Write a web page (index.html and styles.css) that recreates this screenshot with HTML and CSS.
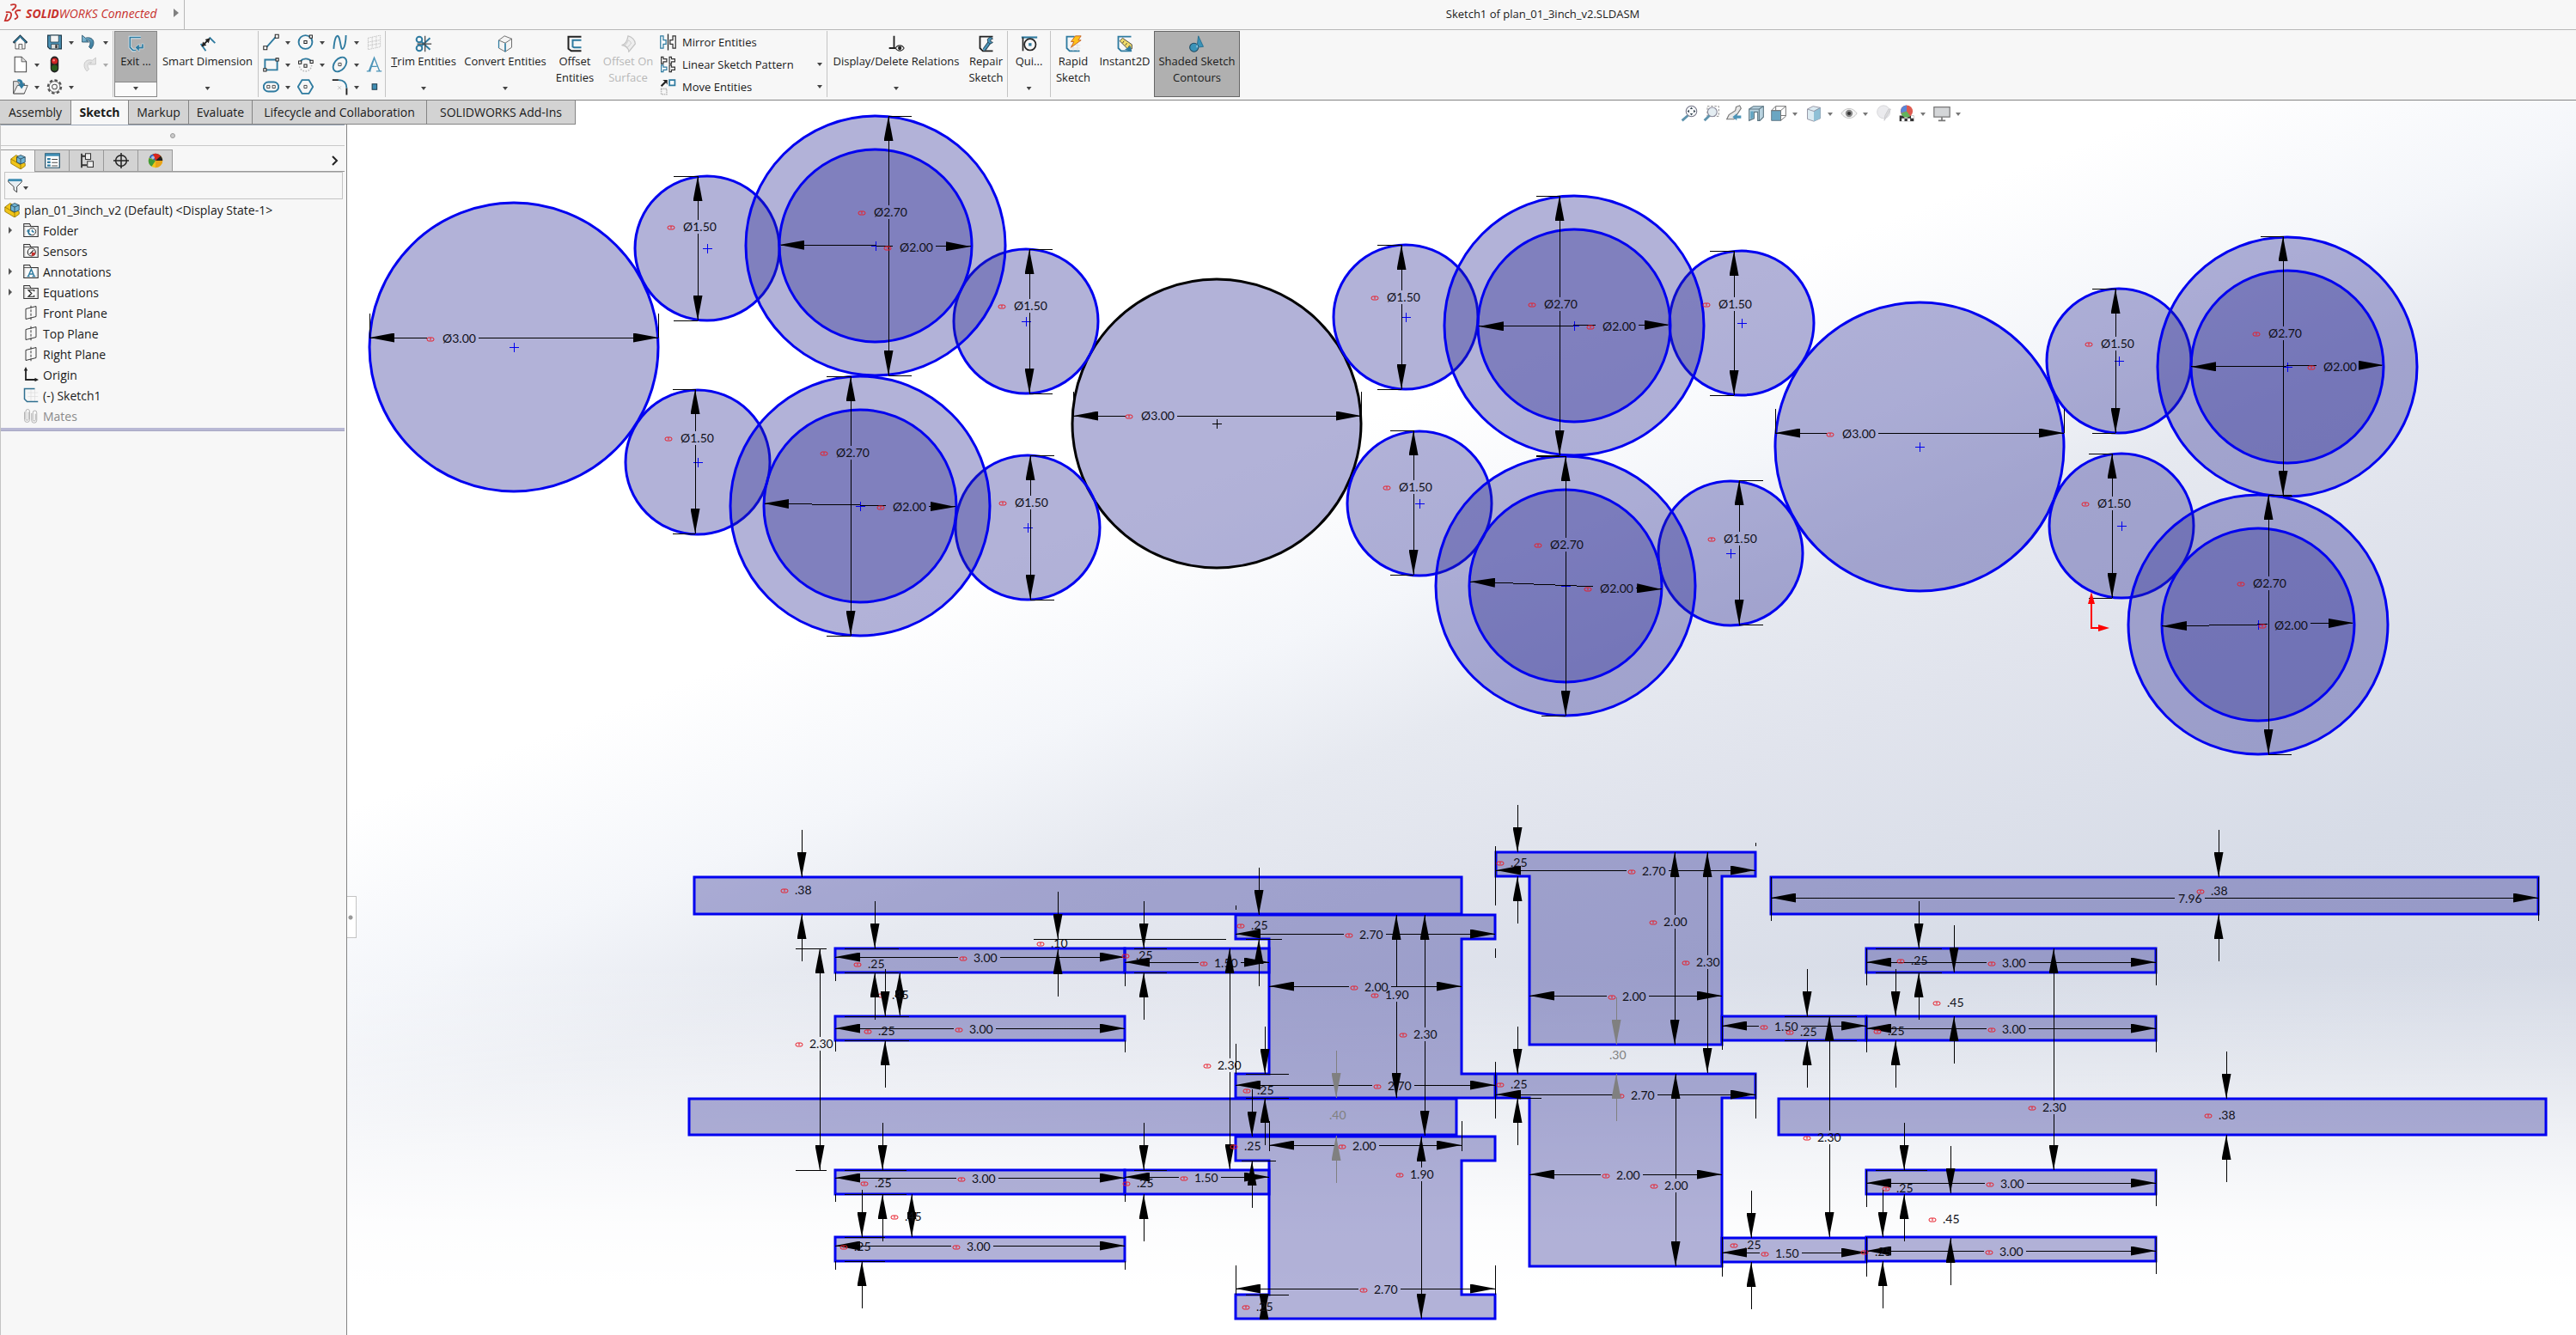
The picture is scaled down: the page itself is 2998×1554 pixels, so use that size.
FILE: index.html
```html
<!DOCTYPE html>
<html lang="en">
<head>
<meta charset="utf-8">
<title>Sketch1 of plan_01_3inch_v2.SLDASM</title>
<link rel="stylesheet" href="styles.css">
</head>
<body>
<svg class="defs" aria-hidden="true">
  <defs>
    <linearGradient id="gb" x1="0" y1="0" x2="1" y2="1"><stop offset="0" stop-color="#8cc4de"/><stop offset="1" stop-color="#2c6f92"/></linearGradient>
    <symbol id="i-home" viewBox="0 0 24 24"><path d="M5 12v10h14V12L12 5z" fill="#fff" stroke="#333"/><path d="M2 13L12 3l10 10" fill="none" stroke="#1f3a4a" stroke-width="3"/><path d="M4 12l8-8 8 8" fill="none" stroke="#3f8db3" stroke-width="1.5"/><path d="M10 22v-7h5v7" fill="#eee" stroke="#333"/></symbol>
    <symbol id="i-save" viewBox="0 0 24 24"><path d="M2 2h20v20H5l-3-3z" fill="#4c94b8" stroke="#1f3a4a" stroke-width="1.5"/><path d="M6 2h12v10H6z" fill="#f4f4f4" stroke="#1f3a4a"/><path d="M7 15h11v7H7z" fill="#ddd" stroke="#1f3a4a"/><path d="M13 16h3v5h-3z" fill="#333"/></symbol>
    <symbol id="i-undo" viewBox="0 0 24 24"><path d="M2 2v10h10L8 9c5-1 8 4 4 10l3 3c8-9 3-19-8-16z" fill="url(#gb)" stroke="#1f4a62"/></symbol>
    <symbol id="i-redo" viewBox="0 0 24 24"><path d="M22 2v10H12l4-3c-5-1-8 4-4 10l-3 3C1 13 6 3 17 6z" fill="#e4e4e4" stroke="#c0c0c0"/></symbol>
    <symbol id="i-new" viewBox="0 0 24 24"><path d="M4 1h10l7 7v15H4z" fill="#fff" stroke="#444" stroke-width="1.3"/><path d="M14 1v7h7" fill="#ddd" stroke="#444"/></symbol>
    <symbol id="i-light" viewBox="0 0 24 24"><rect x="6" y="0" width="12" height="24" rx="6" fill="#222"/><circle cx="12" cy="7" r="4.500" fill="#c22"/><circle cx="12" cy="17" r="4.500" fill="#285a1c"/><circle cx="11" cy="6" r="1.500" fill="#f88"/></symbol>
    <symbol id="i-open" viewBox="0 0 24 24"><path d="M2 4h6l2 3h8v15H2z" fill="#ddd" stroke="#333"/><path d="M2 22L8 10h15l-5 12z" fill="#f4f4f4" stroke="#333"/><path d="M8 1c6-1 8 2 8 7h3l-5 7-5-7h3c0-3-1-4-4-4z" fill="#2f7ba0"/></symbol>
    <symbol id="i-gear" viewBox="0 0 24 24"><circle cx="12" cy="12" r="9.500" fill="none" stroke="#555" stroke-width="3" stroke-dasharray="4.400 3"/><circle cx="12" cy="12" r="8" fill="#f7f7f7" stroke="#555"/><circle cx="12" cy="12" r="3.600" fill="#fff" stroke="#555" stroke-width="1.3"/></symbol>
    <symbol id="i-exit" viewBox="0 0 24 24"><path d="M19 3H4v14l4 4h4" fill="none" stroke="#d9e8f0" stroke-width="4"/><path d="M19 3H4v14l4 4h4" fill="none" stroke="#2f7ba0" stroke-width="2"/><path d="M23 12v7h-6v4l-6-6 6-5v4h3v-4z" fill="#2f7ba0" stroke="#e4eef3" stroke-width=".7"/></symbol>
    <symbol id="i-smart" viewBox="0 0 24 24"><path d="M14 3l8 8M2 12l7 10" stroke="#2f7ba0" stroke-width="2.2"/><path d="M4 15L14 5" stroke="#222" stroke-width="2.2"/><path d="M3 16l2-7 5 5zM15 4l-2 7-5-5z" fill="#222"/></symbol>
    <symbol id="i-line" viewBox="0 0 24 24"><path d="M4 21L20 3" stroke="#2f7ba0" stroke-width="2.4"/><path d="M1 18h5v5H1zM18 1h5v5h-5z" fill="#fff" stroke="#222" stroke-width="1.3"/></symbol>
    <symbol id="i-circle" viewBox="0 0 24 24"><circle cx="12" cy="12" r="10" fill="none" stroke="#2f7ba0" stroke-width="2.4"/><path d="M10 10h4v4h-4zM18 2h4v4h-4z" fill="#fff" stroke="#222" stroke-width="1.3"/></symbol>
    <symbol id="i-spline" viewBox="0 0 24 24"><path d="M3 22C4 8 7 0 10 4s3 19 6 18 5-11 5-20" fill="none" stroke="#2f7ba0" stroke-width="2.4"/></symbol>
    <symbol id="i-plane" viewBox="0 0 24 24"><path d="M3 6l18-4v17L3 23zM9 5v16M15 4v16M3 12l18-3M3 17l18-3" fill="none" stroke="#bbb" stroke-dasharray="2 1"/></symbol>
    <symbol id="i-rect" viewBox="0 0 24 24"><path d="M3 5h18v15H3z" fill="none" stroke="#2f7ba0" stroke-width="2.4"/><path d="M1 18h4v4H1zM19 3h4v4h-4z" fill="#fff" stroke="#222" stroke-width="1.3"/></symbol>
    <symbol id="i-arc" viewBox="0 0 24 24"><circle cx="12" cy="13" r="9" fill="none" stroke="#bbb" stroke-width="2" stroke-dasharray="2 2"/><path d="M4 9c3-7 13-7 17-1" fill="none" stroke="#2f7ba0" stroke-width="2.4"/><path d="M2 7h4v4H2zM19 6h4v4h-4zM10 12h4v4h-4z" fill="#fff" stroke="#222" stroke-width="1.3"/></symbol>
    <symbol id="i-ellipse" viewBox="0 0 24 24"><ellipse cx="12" cy="12" rx="12" ry="8" transform="rotate(-50 12 12)" fill="none" stroke="#2f7ba0" stroke-width="2.4"/><path d="M10 10h4v4h-4z" fill="#fff" stroke="#222"/></symbol>
    <symbol id="i-text" viewBox="0 0 24 24"><path d="M1 22h6M15 22h8M4 22L12 2l8 20M12 2l-1 4-5 15M8 15h8" fill="none" stroke="#4c94b8" stroke-width="1.7"/></symbol>
    <symbol id="i-slot" viewBox="0 0 24 24"><rect x="1" y="5" width="22" height="14" rx="7" fill="none" stroke="#2f7ba0" stroke-width="2.4"/><path d="M6 10h4v4H6zM14 10h4v4h-4z" fill="#fff" stroke="#222"/></symbol>
    <symbol id="i-hex" viewBox="0 0 24 24"><path d="M7 2h10l6 10-6 10H7L1 12z" fill="none" stroke="#2f7ba0" stroke-width="2.4"/><path d="M10 10h4v4h-4z" fill="#fff" stroke="#222"/></symbol>
    <symbol id="i-fillet" viewBox="0 0 24 24"><path d="M1 2h9M22 14v10" stroke="#222" stroke-width="2.4"/><path d="M10 2c8 0 12 5 12 12" fill="none" stroke="#2f7ba0" stroke-width="2.4"/><path d="M9 11l5 5M14 11l-5 5" stroke="#bbb"/></symbol>
    <symbol id="i-point" viewBox="0 0 24 24"><path d="M9 8h7v8H9z" fill="#3f8db3" stroke="#1f3a4a" stroke-width="1.3"/></symbol>
    <symbol id="i-trim" viewBox="0 0 24 24"><circle cx="6" cy="6" r="4" fill="none" stroke="#2f7ba0" stroke-width="2.4"/><circle cx="6" cy="18" r="4" fill="none" stroke="#2f7ba0" stroke-width="2.4"/><path d="M8 8l13 12M8 16L21 4" stroke="#2f7ba0" stroke-width="2.4"/><path d="M14 1v22M3 12h20" stroke="#444" stroke-width="1.5"/></symbol>
    <symbol id="i-convert" viewBox="0 0 24 24"><path d="M3 7l8-6 10 4v12l-9 6-9-5z" fill="#f4f4f4" stroke="#555"/><path d="M3 7l9 4 9-6" fill="none" stroke="#555"/><path d="M12 11v12" stroke="#2f7ba0" stroke-width="2"/><path d="M3 7v11" stroke="#2f7ba0" stroke-width="1.5"/></symbol>
    <symbol id="i-offset" viewBox="0 0 24 24"><path d="M21 2H3v17l4 3h14" fill="none" stroke="#222" stroke-width="2.4"/><path d="M21 7H9v9l2 1h10" fill="none" stroke="#2f7ba0" stroke-width="2.4"/></symbol>
    <symbol id="i-surface" viewBox="0 0 24 24"><path d="M12 1c5 1 10 6 10 11l-9 11c0-5-6-9-10-9 5-1 8-7 9-13z" fill="#eee" stroke="#c4c4c4" stroke-width="1.5"/><path d="M12 7c3 1 4 3 4 5l-5 5-4-3c3-1 4-4 5-7z" fill="none" stroke="#c4c4c4"/></symbol>
    <symbol id="i-mirror" viewBox="0 0 24 24"><path d="M12 0v24" stroke="#222" stroke-width="1.6"/><path d="M1 3h4v6h4v6H5v6H1z" fill="#fff" stroke="#2f7ba0" stroke-width="1.6"/><path d="M23 3h-4v6h-4v6h4v6h4z" fill="#fff" stroke="#333" stroke-width="1.6"/></symbol>
    <symbol id="i-pattern" viewBox="0 0 24 24"><path d="M2 1h3v3h5v4H5v3H2zM14 1h3v3h5v4h-5v3h-3zM14 13h3v3h5v4h-5v3h-3z" fill="#fff" stroke="#333" stroke-width="1.5"/><path d="M2 13h3v3h5v4H5v3H2z" fill="#fff" stroke="#2f7ba0" stroke-width="1.5"/></symbol>
    <symbol id="i-move" viewBox="0 0 24 24"><path d="M14 2h8v8h-8z" fill="#fff" stroke="#2f7ba0" stroke-width="2.2"/><path d="M1 10l6-6-3-2h7v7L9 6l-6 6z" fill="#222"/><path d="M2 15h8v8H2z" fill="none" stroke="#bbb" stroke-width="2" stroke-dasharray="2 1"/></symbol>
    <symbol id="i-relations" viewBox="0 0 24 24"><path d="M9 1v17M2 18h11" stroke="#222" stroke-width="2.2"/><path d="M11 18c3-5 9-5 12 0-3 5-9 5-12 0z" fill="#fff" stroke="#333" stroke-width="1.3"/><circle cx="17" cy="18" r="2.600" fill="#222"/></symbol>
    <symbol id="i-repair" viewBox="0 0 24 24"><path d="M21 2H3v16l4 4h14" fill="none" stroke="#222" stroke-width="2.2"/><path d="M9 20l8-11" stroke="#1f3a4a" stroke-width="5"/><path d="M8 21l9-12" stroke="#4c94b8" stroke-width="3"/><path d="M14 9a4 4 0 017-4l-3 1v3l3 1c-3 3-6 2-7-1z" fill="#4c94b8" stroke="#1f3a4a"/></symbol>
    <symbol id="i-snap" viewBox="0 0 24 24"><path d="M1 3h22" stroke="#2f7ba0" stroke-width="2.6"/><path d="M3 3v19" stroke="#222" stroke-width="2"/><circle cx="13" cy="13" r="8" fill="none" stroke="#222" stroke-width="2"/><path d="M11 11h4v4h-4z" fill="#2f7ba0"/></symbol>
    <symbol id="i-rapid" viewBox="0 0 24 24"><path d="M14 2H3v16l4 4h14" fill="none" stroke="#2f7ba0" stroke-width="2.2"/><path d="M7 14h15M7 18h15M12 10v12M18 10v12" stroke="#ddd"/><path d="M15 1h8l-4 6h4L9 17l4-8H9z" fill="#ffc21a" stroke="#c0561b"/></symbol>
    <symbol id="i-instant" viewBox="0 0 24 24"><path d="M21 2H3v16l4 4h14" fill="none" stroke="#2f7ba0" stroke-width="2.2"/><path d="M5 8l4-4 13 9v6h-6z" fill="#f2dc6b" stroke="#333"/><path d="M9 11l2-3M13 14l2-3M17 17l2-3" stroke="#333"/><path d="M12 20l10 3-2-8z" fill="#2f7ba0"/></symbol>
    <symbol id="i-shaded" viewBox="0 0 24 24"><path d="M14 1l7 15-9 1z" fill="#3a93b8" stroke="#1f6a8c"/><circle cx="8" cy="17" r="6" fill="#3a93b8" stroke="#1f4a62" stroke-width="1.3"/><path d="M12 12l-1 5 3 0z" fill="#8cc4de"/></symbol>
    <symbol id="i-part" viewBox="0 0 24 24"><path d="M1 8l8-6 5 3v6l9 4v4l-7 5L1 15z" fill="#f0c419" stroke="#8a6c00"/><path d="M1 8l15 9v7" fill="none" stroke="#8a6c00"/><path d="M10 5l6-3 7 3v8l-7 3-6-3z" fill="#6fb3d4" stroke="#1f3a4a"/><path d="M10 5l6 3 7-3M16 8v8" fill="none" stroke="#1f3a4a"/></symbol>
    <symbol id="i-props" viewBox="0 0 24 24"><path d="M1 1h22v22H1z" fill="#fff" stroke="#1f4a62" stroke-width="1.6"/><path d="M1 1h22v4H1z" fill="#3f8db3"/><path d="M4 8h5v3H4zM4 13h5v3H4zM4 18h5v3H4z" fill="#2f7ba0"/><path d="M11 10h9M11 15h9M11 20h9" stroke="#444" stroke-width="1.3"/></symbol>
    <symbol id="i-config" viewBox="0 0 24 24"><path d="M4 1v22M4 5h6M4 19h8" stroke="#333" stroke-width="2.4"/><path d="M10 1h8v9h-8zM13 13h9v9h-9z" fill="#eee" stroke="#333" stroke-width="1.4"/></symbol>
    <symbol id="i-target" viewBox="0 0 24 24"><circle cx="12" cy="12" r="8.500" fill="none" stroke="#222" stroke-width="2"/><path d="M12 0v24M0 12h24" stroke="#222" stroke-width="2"/></symbol>
    <symbol id="i-ball" viewBox="0 0 24 24"><circle cx="12" cy="12" r="11" fill="#f2c41a"/><path d="M12 12L2 7A11 11 0 0118 3z" fill="#2d62c0"/><path d="M12 12l6-9a11 11 0 015 9z" fill="#222"/><path d="M12 12L8 1.700a11 11 0 0112 3z" fill="#d8261c"/><path d="M12 12l11 0A11 11 0 0112 23z" fill="#e8a21a"/><path d="M12 12L2 8a11 11 0 004 13z" fill="#3f9c3a"/><circle cx="8" cy="7" r="2.500" fill="#fff" opacity=".6"/></symbol>
    <symbol id="i-funnel" viewBox="0 0 24 24"><path d="M1 3h22v3l-8 8v9l-5-4v-5L1 6z" fill="#e8eef2" stroke="#333" stroke-width="1.3"/><path d="M1 1h22v4H1z" fill="#3f8db3"/></symbol>
    <symbol id="i-folder" viewBox="0 0 24 24"><path d="M1 22V2h9l2 4h11v16z" fill="#e8e8e8" stroke="#333" stroke-width="1.4"/><path d="M1 6h22" stroke="#333"/><rect x="4" y="8" width="16" height="12" fill="#fafafa"/></symbol>
    <symbol id="i-history" viewBox="0 0 24 24"><use href="#i-folder"/><circle cx="14" cy="14" r="5.500" fill="#fff" stroke="#333" stroke-width="1.3"/><path d="M14 11v3l3 1M8 12c-1 4 1 7 4 7" fill="none" stroke="#2f7ba0" stroke-width="2"/><path d="M5 14l3-4 3 4z" fill="#2f7ba0"/></symbol>
    <symbol id="i-sensor" viewBox="0 0 24 24"><use href="#i-folder"/><circle cx="13" cy="14" r="6" fill="#fff" stroke="#333" stroke-width="1.6"/><path d="M13 14l6 1a6 6 0 01-6 5z" fill="#c8322e"/><path d="M10 17l6-6" stroke="#333" stroke-width="1.5"/></symbol>
    <symbol id="i-annot" viewBox="0 0 24 24"><use href="#i-folder"/><path d="M6 19.500h4M14 19.500h5M8 19L12.500 8.500 17 19M9.500 16h6" fill="none" stroke="#2f7ba0" stroke-width="1.900"/></symbol>
    <symbol id="i-equation" viewBox="0 0 24 24"><use href="#i-folder"/><path d="M17 11V9H8l5 5-5 5h9v-2" fill="none" stroke="#222" stroke-width="1.6"/></symbol>
    <symbol id="i-refplane" viewBox="0 0 24 24"><path d="M4 6l16-4v16L4 22z" fill="none" stroke="#333" stroke-width="1.300"/><path d="M12 1v22" stroke="#333" stroke-dasharray="4 2" stroke-width="1.300"/></symbol>
    <symbol id="i-origin" viewBox="0 0 24 24"><path d="M4 3v17h17" fill="none" stroke="#222" stroke-width="2.400"/><path d="M4 0l3 6H1zM24 20l-6-3v6z" fill="#222"/></symbol>
    <symbol id="i-sketch" viewBox="0 0 24 24"><path d="M7 8h16M7 14h16M12 3v18M18 3v18" stroke="#ddd"/><path d="M18 2H2v16l4 4h17" fill="none" stroke="#2f6f90" stroke-width="2"/></symbol>
    <symbol id="i-mates" viewBox="0 0 24 24"><path d="M8 6v11a2 2 0 01-4 0V5a3 3 0 016 0v13a4 4 0 01-8 0V6M19 9v9a2 2 0 01-4 0V7a3 3 0 016 0v12a4 4 0 01-8 0V8" fill="none" stroke="#aaa" stroke-width="1.200"/></symbol>
    <symbol id="i-zoomfit" viewBox="0 0 24 24"><circle cx="15" cy="9" r="7.500" fill="#f6f8fa" stroke="#778" stroke-width="1.300"/><path d="M15 3l2 3h-4zM15 15l2-3h-4zM9 9l3-2v4zM21 9l-3-2v4z" fill="#3b4a55"/><path d="M10 15l-8 7" stroke="#5f93ad" stroke-width="3.500"/></symbol>
    <symbol id="i-zoomarea" viewBox="0 0 24 24"><path d="M6 2h16v14H6z" fill="none" stroke="#777" stroke-dasharray="3 2"/><circle cx="13" cy="10" r="6.500" fill="#e4edf2" stroke="#889" stroke-width="1.300"/><path d="M9 15l-7 7" stroke="#5f93ad" stroke-width="3.500"/></symbol>
    <symbol id="i-prev" viewBox="0 0 24 24"><path d="M15 3l5-2 2 4-10 15H2l3-6 9-6z" fill="#e8e8e8" stroke="#777" stroke-width="1.300"/><path d="M10 17l6-5v3h6v4h-6v3z" fill="#4c94b8"/></symbol>
    <symbol id="i-section" viewBox="0 0 24 24"><path d="M2 6l6-4h14v15l-5 5h-3V10H9v9l-7 3z" fill="#b9d3e0" stroke="#5c7582" stroke-width="1.300"/><path d="M2 6h14l6-4M16 6v16" fill="none" stroke="#5c7582" stroke-width="1.300"/><path d="M4 9h4v9l-4 2z" fill="#5fa3c0"/></symbol>
    <symbol id="i-orient" viewBox="0 0 24 24"><path d="M2 8h13v14H2z" fill="#6ba6c2" stroke="#5a6f7c"/><path d="M2 8l6-6h14v14l-7 6V8zM15 8l7-6M8 2v6M15 15h7" fill="none" stroke="#777" stroke-width="1.200"/></symbol>
    <symbol id="i-display" viewBox="0 0 24 24"><path d="M3 6l8-4 10 2v15l-9 4-9-3z" fill="#dcebf2" stroke="#889"/><path d="M12 9v14l9-4V4z" fill="#8fc0d6"/><path d="M3 6l9 3 9-5" fill="none" stroke="#889"/></symbol>
    <symbol id="i-eye" viewBox="0 0 24 24"><path d="M1 12c6-9 16-9 22 0-6 9-16 9-22 0z" fill="#f4f4f4" stroke="#bbb"/><circle cx="12" cy="12" r="5" fill="#888"/><circle cx="12" cy="12" r="2.500" fill="#333"/></symbol>
    <symbol id="i-edit" viewBox="0 0 24 24"><circle cx="11" cy="10" r="9" fill="#ebebee" stroke="#d2d2d6"/><path d="M21 6l-9 16 1-7 5-9z" fill="#ddd" stroke="#c8c8cc"/></symbol>
    <symbol id="i-scene" viewBox="0 0 24 24"><path d="M2 15h20v8H2z" fill="#333"/><path d="M5 19h4v4H5zM13 19h4v4h-4zM9 15h4v4H9zM18 15h4v4h-4z" fill="#fff"/><circle cx="12" cy="9" r="8.500" fill="#dd5a50"/><path d="M12 9V.5a8.500 8.500 0 00-8 11z" fill="#5a86d8"/><path d="M12 9l-8 3a8.500 8.500 0 0013 4z" fill="#62b45e"/></symbol>
    <symbol id="i-monitor" viewBox="0 0 24 24"><path d="M1 3h22v14H1z" fill="#d4d6d8" stroke="#777" stroke-width="1.500"/><path d="M12 17v5M7 22h10" stroke="#777" stroke-width="2"/></symbol>
  </defs>
</svg>

<div class="app">
  <header class="titlebar">
    <div class="brand">
      <svg class="mark" viewBox="0 0 24 24"><path d="M9 2c6-2 8 0 6 3l-4 4M3 11h4c5 0 3 9-2 11H2l3-9M22 9c-5-1-8 1-6 4s4 5-2 7" fill="none" stroke="#c8322e" stroke-width="2"/></svg>
      <span class="brand-name"><b>SOLID</b>WORKS Connected</span>
      <button class="expand" aria-label="Show menu"></button>
    </div>
    <h1 class="doc-title">Sketch1 of plan_01_3inch_v2.SLDASM</h1>
  </header>

  <div class="ribbon">
    <div class="icon-grid files">
      <div class="cell"><button aria-label="Home"><svg><use href="#i-home"/></svg></button></div>
      <div class="cell"><button class="more" aria-label="Save"><svg><use href="#i-save"/></svg></button></div>
      <div class="cell"><button class="more" aria-label="Undo"><svg><use href="#i-undo"/></svg></button></div>
      <div class="cell"><button class="more" aria-label="New"><svg><use href="#i-new"/></svg></button></div>
      <div class="cell"><button aria-label="Rebuild"><svg><use href="#i-light"/></svg></button></div>
      <div class="cell"><button class="more faded" aria-label="Redo"><svg><use href="#i-redo"/></svg></button></div>
      <div class="cell"><button class="more" aria-label="Open"><svg><use href="#i-open"/></svg></button></div>
      <div class="cell"><button class="more" aria-label="Options"><svg><use href="#i-gear"/></svg></button></div>
    </div>
    <button class="tool w50 exit"><svg><use href="#i-exit"/></svg><span>Exit ...</span><i class="caret"></i></button>
    <button class="tool w118 sep"><svg><use href="#i-smart"/></svg><span>Smart Dimension</span><i class="caret"></i></button>
    <div class="icon-grid sketch-tools sep">
      <div class="cell"><button class="more" aria-label="Line"><svg><use href="#i-line"/></svg></button></div>
      <div class="cell"><button class="more" aria-label="Circle"><svg><use href="#i-circle"/></svg></button></div>
      <div class="cell"><button class="more" aria-label="Spline"><svg><use href="#i-spline"/></svg></button></div>
      <div class="cell"><button aria-label="Plane"><svg><use href="#i-plane"/></svg></button></div>
      <div class="cell"><button class="more" aria-label="Rectangle"><svg><use href="#i-rect"/></svg></button></div>
      <div class="cell"><button class="more" aria-label="Arc"><svg><use href="#i-arc"/></svg></button></div>
      <div class="cell"><button class="more" aria-label="Ellipse"><svg><use href="#i-ellipse"/></svg></button></div>
      <div class="cell"><button aria-label="Text"><svg><use href="#i-text"/></svg></button></div>
      <div class="cell"><button class="more" aria-label="Slot"><svg><use href="#i-slot"/></svg></button></div>
      <div class="cell"><button aria-label="Polygon"><svg><use href="#i-hex"/></svg></button></div>
      <div class="cell"><button class="more" aria-label="Fillet"><svg><use href="#i-fillet"/></svg></button></div>
      <div class="cell"><button aria-label="Point"><svg><use href="#i-point"/></svg></button></div>
    </div>
    <button class="tool w88"><svg><use href="#i-trim"/></svg><span><u>T</u>rim Entities</span><i class="caret"></i></button>
    <button class="tool w102"><svg><use href="#i-convert"/></svg><span>Convert Entities</span><i class="caret"></i></button>
    <button class="tool w60"><svg><use href="#i-offset"/></svg><span>Offset Entities</span></button>
    <button class="tool w64 faded"><svg><use href="#i-surface"/></svg><span>Offset On Surface</span></button>
    <div class="list sep">
      <button><svg><use href="#i-mirror"/></svg><span>Mirror Entities</span></button>
      <button><svg><use href="#i-pattern"/></svg><span>Linear Sketch Pattern</span><i class="caret"></i></button>
      <button><svg><use href="#i-move"/></svg><span>Move Entities</span><i class="caret"></i></button>
    </div>
    <button class="tool w160"><svg><use href="#i-relations"/></svg><span>Display/Delete Relations</span><i class="caret"></i></button>
    <button class="tool w50 sep"><svg><use href="#i-repair"/></svg><span>Repair Sketch</span></button>
    <button class="tool w50 sep"><svg><use href="#i-snap"/></svg><span>Qui...</span><i class="caret"></i></button>
    <button class="tool w52"><svg><use href="#i-rapid"/></svg><span>Rapid Sketch</span></button>
    <button class="tool w68"><svg><use href="#i-instant"/></svg><span>Instant2D</span></button>
    <button class="tool w100 pressed"><svg><use href="#i-shaded"/></svg><span>Shaded Sketch Contours</span></button>
  </div>

  <main class="workspace">
    <nav class="tabs">
      <button>Assembly</button><button class="active">Sketch</button><button>Markup</button><button>Evaluate</button><button>Lifecycle and Collaboration</button><button>SOLIDWORKS Add-Ins</button>
    </nav>
    <aside class="panel">
      <div class="grip"><i></i></div>
      <div class="panel-tabs">
        <button class="active" aria-label="Feature tree"><svg><use href="#i-part"/></svg></button>
        <button aria-label="Properties"><svg><use href="#i-props"/></svg></button>
        <button aria-label="Configurations"><svg><use href="#i-config"/></svg></button>
        <button aria-label="DimXpert"><svg><use href="#i-target"/></svg></button>
        <button aria-label="Display manager"><svg><use href="#i-ball"/></svg></button>
        <button class="next" aria-label="More tabs"><svg viewBox="0 0 8 12"><path d="M1 1l5 5-5 5" fill="none" stroke="#222" stroke-width="2"/></svg></button>
      </div>
      <button class="filter" aria-label="Filter"><svg><use href="#i-funnel"/></svg><i class="caret"></i></button>
      <ul class="tree">
        <li class="root"><svg><use href="#i-part"/></svg>plan_01_3inch_v2 (Default) &lt;Display State-1&gt;</li>
        <li class="closed"><svg><use href="#i-history"/></svg>Folder</li>
        <li><svg><use href="#i-sensor"/></svg>Sensors</li>
        <li class="closed"><svg><use href="#i-annot"/></svg>Annotations</li>
        <li class="closed"><svg><use href="#i-equation"/></svg>Equations</li>
        <li><svg><use href="#i-refplane"/></svg>Front Plane</li>
        <li><svg><use href="#i-refplane"/></svg>Top Plane</li>
        <li><svg><use href="#i-refplane"/></svg>Right Plane</li>
        <li><svg><use href="#i-origin"/></svg>Origin</li>
        <li><svg><use href="#i-sketch"/></svg>(-) Sketch1</li>
        <li class="muted"><svg><use href="#i-mates"/></svg>Mates</li>
      </ul>
      <div class="rollback"></div>
    </aside>
    <section class="view">
      <svg id="sketch" class="sketch" viewBox="404 117 2594 1437" preserveAspectRatio="xMinYMin meet" role="img" aria-label="Gear train sketch">
        <defs>
          <marker id="tip" viewBox="0 0 29 11" refX="29" refY="5.5" markerWidth="29" markerHeight="11" markerUnits="userSpaceOnUse" orient="auto-start-reverse"><path d="M0 0L29 5.500L0 11z" fill="#000"/></marker>
          <marker id="tip-ref" viewBox="0 0 29 11" refX="29" refY="5.5" markerWidth="29" markerHeight="11" markerUnits="userSpaceOnUse" orient="auto-start-reverse"><path d="M0 0L29 5.500L0 11z" fill="#808080"/></marker>
          <symbol id="rel" viewBox="0 0 10 6"><rect x="1" y="1" width="8" height="4" rx="2" fill="none" stroke="#e8202c"/><path d="M5 1v3" stroke="#e8202c"/></symbol>
        </defs>
      </svg>
      <div class="hud">
        <button aria-label="Zoom to fit"><svg><use href="#i-zoomfit"/></svg></button>
        <button aria-label="Zoom to area"><svg><use href="#i-zoomarea"/></svg></button>
        <button aria-label="Previous view"><svg><use href="#i-prev"/></svg></button>
        <button aria-label="Section view"><svg><use href="#i-section"/></svg></button>
        <button class="more" aria-label="View orientation"><svg><use href="#i-orient"/></svg></button>
        <button class="more" aria-label="Display style"><svg><use href="#i-display"/></svg></button>
        <button class="more" aria-label="Hide or show items"><svg><use href="#i-eye"/></svg></button>
        <button aria-label="Edit appearance"><svg><use href="#i-edit"/></svg></button>
        <button class="more" aria-label="Apply scene"><svg><use href="#i-scene"/></svg></button>
        <button class="more" aria-label="View settings"><svg><use href="#i-monitor"/></svg></button>
      </div>
      <button class="flyout" aria-label="Collapse panel"></button>
    </section>
  </main>
</div>
<script src="sketch.js"></script>
</body>
</html>
```
FILE: styles.css
```css
* { box-sizing: border-box; }
body { margin: 0; font-family: "Open Sans", "Noto Sans", sans-serif; font-size: 14px; color: #1a1a1a; background: #f7f7f7; }
button { font: inherit; color: inherit; background: none; border: 0; padding: 0; margin: 0; }
svg { display: block; }
.defs { position: absolute; width: 0; height: 0; }
.app { display: flex; flex-direction: column; min-height: 100vh; }

.titlebar { display: flex; height: 35px; border-bottom: 1px solid #b8b8b8; }
.brand { display: flex; align-items: center; width: 215px; padding: 0 6px 4px 4px; border-right: 1px solid #b8b8b8; }
.mark { width: 22px; height: 22px; }
.brand-name { flex: 1; padding-left: 4px; font-size: 14px; font-style: italic; color: #c8322e; white-space: nowrap; }
.expand { width: 6px; height: 10px; background: #808080; clip-path: polygon(0 0, 100% 50%, 0 100%); }
.doc-title { flex: 1; margin: 0; padding-left: 378px; font-size: 13px; font-weight: 400; line-height: 32px; text-align: center; }

.ribbon { display: flex; height: 82px; padding: 1px 0 3px; border-bottom: 1px solid #848484; }
.sep { border-right: 1px solid #c4c4c4; }
.icon-grid { display: grid; grid-template-columns: repeat(4, 40px); grid-auto-rows: 26px; }
.files { grid-template-columns: repeat(3, 40px); width: 132px; padding-left: 11px; border-right: 1px solid #c4c4c4; }
.sketch-tools { grid-template-columns: 40px 40px 40px 28px; width: 148px; padding-left: 2px; }
.cell button { position: relative; display: block; width: 38px; height: 26px; padding: 3px; }
.cell svg { width: 19px; height: 20px; }
.more::after { content: ""; position: absolute; right: 3px; top: 12px; border: 3px solid transparent; border-top: 4px solid #444; border-bottom: 0; }
.faded { color: #b8b8b8; }
.faded.more::after { border-top-color: #aaa; }
.caret { width: 6px; height: 4px; background: #444; clip-path: polygon(0 0, 100% 0, 50% 100%); }
.tool { position: relative; display: flex; flex-direction: column; align-items: center; padding-top: 5px; font-size: 13px; line-height: 19px; text-align: center; }
.tool svg { width: 20px; height: 20px; margin-bottom: 1px; }
.tool .caret { position: absolute; bottom: 8px; }
.w50 { width: 50px; } .w52 { width: 52px; } .w60 { width: 60px; } .w64 { width: 64px; } .w68 { width: 68px; }
.w88 { width: 88px; } .w100 { width: 100px; } .w102 { width: 102px; } .w118 { width: 118px; } .w160 { width: 160px; }
.tool span { white-space: nowrap; }
.w60 span, .w64 span, .sep.w50 span, .w52 span, .w100 span { white-space: normal; }
.exit { margin-left: 1px; border: 1px solid #888; padding-top: 4px; background: linear-gradient(#b0b0b0 58px, #888 58px, #888 59px, #fafafa 59px); }
.exit .caret { bottom: 7px; }
.pressed { border: 1px solid #666; padding-top: 4px; background: #b0b0b0; }
.list { display: grid; grid-auto-rows: 26px; width: 200px; padding-left: 5px; font-size: 13px; }
.list button { display: flex; align-items: center; text-align: left; }
.list svg { width: 19px; height: 20px; margin-right: 7px; }
.list span { flex: 1; }
.list .caret { margin-right: 5px; }

.workspace { position: relative; display: flex; flex: 1; }
.tabs { position: absolute; left: 0; top: 0; z-index: 2; display: grid; grid-template-columns: 83px 67px 70px 74px 203px 173px; height: 28px; border-bottom: 1px solid #848484; }
.tabs button { background: #d3d3d3; border-right: 1px solid #848484; line-height: 26px; white-space: nowrap; }
.tabs .active { margin-bottom: -1px; background: #f7f7f7; font-weight: 700; }
.panel { width: 404px; padding-top: 28px; border-left: 1px solid #c4c4c4; border-right: 1px solid #848484; background: #f7f7f7; }
.grip { display: flex; align-items: center; justify-content: center; height: 25px; margin-right: 2px; border-top: 1px solid #9aa6b8; border-bottom: 1px solid #c8c8c8; }
.grip i { width: 6px; height: 6px; border: 1px solid #999; border-radius: 50%; background: #ccc; }
.panel-tabs { display: flex; height: 30px; padding-top: 4px; margin-right: 2px; border-bottom: 1px solid #999; }
.panel-tabs button { display: grid; place-items: center; width: 40px; border: 1px solid #999; border-left: 0; border-bottom: 0; background: #d3d3d3; }
.panel-tabs .active { background: #f7f7f7; margin-bottom: -1px; }
.panel-tabs svg { width: 18px; height: 18px; }
.panel-tabs .next { width: 22px; margin-left: auto; border: 0; background: none; }
.panel-tabs .next svg { width: 8px; height: 12px; }
.filter { display: flex; align-items: center; width: 394px; height: 32px; margin-left: 4px; padding-left: 3px; border: 1px solid #c4c4c4; }
.filter svg { width: 17px; height: 18px; }
.filter .caret { margin: 6px 0 0 1px; }
.tree { list-style: none; margin: 0 0 2px; padding: 0; }
.tree li { position: relative; display: flex; align-items: center; height: 24px; padding-left: 26px; white-space: nowrap; }
.tree svg { width: 18px; height: 18px; margin-right: 5px; }
.tree .root { padding-left: 4px; }
.tree .closed::before { content: ""; position: absolute; left: 9px; top: 8px; border: 4px solid transparent; border-left-color: #555; border-right: 0; }
.tree .muted { color: #8a8a8a; }
.rollback { height: 4px; margin-right: 2px; background: #b8b8d4; border-bottom: 1px solid #a8a8c4; }

.view {
  position: relative; flex: 1; overflow: hidden;
  background:
    linear-gradient(to bottom, rgba(255, 255, 255, 0) 70%, rgba(255, 255, 255, .35) 78%, rgba(255, 255, 255, .7) 85%, rgba(255, 255, 255, .93) 91%, #fff 96%),
    linear-gradient(159deg, #fff 34%, #f4f6fa 43%, #e6e9f0 50%, #e1e4ed 57%, #d7dce7 72%, #d2d7e3 100%);
}
.sketch { width: 100%; height: auto; }
.hud { position: absolute; left: 59.7%; top: 4px; display: flex; }
.hud button { position: relative; width: 26px; height: 22px; padding: 1px 3px; }
.hud .more { width: 41px; }
.hud .more::after { right: 6px; top: 10px; border-top-color: #777; }
.hud svg { width: 20px; height: 20px; }
.flyout { position: absolute; left: 0; top: 926px; width: 11px; height: 49px; border: 1px solid #c4c4c4; border-left: 0; background: radial-gradient(circle at 4px 24px, #999 2px, #fff 3px); }

.sketch .fill { fill: rgba(35, 35, 143, .35); stroke: #0000f0; stroke-width: 3px; }
.sketch .fill.fixed { stroke: #000; }
.sketch .dim { stroke: #000; stroke-width: 1px; shape-rendering: crispEdges; }
.sketch .dim.ref { stroke: #808080; }
.sketch .start { marker-start: url(#tip); }
.sketch .end { marker-end: url(#tip); }
.sketch .ref.end { marker-end: url(#tip-ref); }
.sketch .center { stroke: #0000f0; stroke-width: 1px; fill: none; shape-rendering: crispEdges; }
.sketch .center.fixed { stroke: #000; }
.sketch text { font-family: Lato, sans-serif; font-size: 14px; fill: #101018; }
.sketch text.ref { fill: #808080; }
.sketch .axis { stroke: #f00; stroke-width: 2px; fill: none; }
.sketch .axis-tip { fill: #f00; }
```
FILE: sketch.js
```js
const out = [];

// Geometry
const circle = (x, y, r, c = '') => out.push(`<circle class="fill ${c}" cx="${x}" cy="${y}" r="${r}"/>`);
const cross = (x, y, c = '') => out.push(`<path class="center ${c}" d="M${x - 5} ${y}h11M${x} ${y - 5}v11"/>`);
const box = (x1, y1, x2, y2) => out.push(`<path class="fill" d="M${x1} ${y1}H${x2}V${y2}H${x1}z"/>`);
const shape = d => out.push(`<path class="fill" d="${d}"/>`);

// Dimension parts
const line = (x1, y1, x2, y2, c = '') => out.push(`<line class="dim ${c}" x1="${x1}" y1="${y1}" x2="${x2}" y2="${y2}"/>`);
const width = t => (t[0] === 'Ø' ? 38 : t[0] === '.' ? 18 : 27);
const label = (x, y, t, c = '') => {
  out.push(`<text class="${c}" x="${x}" y="${y + 5}">${t}</text>`);
  if (!c) out.push(`<use href="#rel" x="${x - (t[0] === 'Ø' ? 19 : 17)}" y="${y - 2}" width="10" height="6"/>`);
};
const vdim = (x, y1, y2, tx, ty, t) => {
  line(x, y1, x, ty - 8, 'start');
  line(x, ty + 8, x, y2, 'end');
  label(tx, ty, t);
};
const hdim = (x1, y1, x2, y2, tx, ty, t, c) => {
  const at = x => y1 + (y2 - y1) * (x - x1) / (x2 - x1);
  const a = tx - (t === 'Ø2.00' ? 8 : 18);
  const b = tx + width(t) + 4;
  line(x1, y1, a, at(a), 'start');
  line(b, at(b), x2, y2, 'end');
  label(tx, ty, t, c);
};
const gap = (x, y1, y2, tx, ty, t, top = 55, bottom = 55, c = '') => {
  line(x, y1 - top, x, y1, c + ' end');
  line(x, y2 + bottom, x, y2, c + ' end');
  label(tx, ty, t, c);
};
const span = (x, y1, y2, tx, ty, t) => {
  line(x, y1, x, y2, 'start end');
  label(tx, ty, t);
};

// Shafts
[[598, 404], [1416, 493, 'fixed'], [2234, 520]].forEach(([x, y, c]) => { circle(x, y, 168, c); cross(x, y, c); });
// Idlers
[[823, 289], [812, 538], [1194, 374], [1196, 614], [1636, 369], [1652, 586], [2027, 376], [2014, 644], [2466, 420], [2469, 612]]
  .forEach(([x, y]) => { circle(x, y, 84); cross(x, y); });
// Gear and hub pairs
[[1019, 286], [1001, 589], [1832, 379], [1822, 682], [2662, 427], [2628, 727]]
  .forEach(([x, y]) => { circle(x, y, 151); circle(x, y, 112); cross(x, y); });

// Side elevation
[[808, 1021, 1701, 1064], [802, 1279, 1695, 1321], [2061, 1021, 2954, 1064], [2070, 1279, 2963, 1321],
 [972, 1104, 1309, 1132], [1309, 1104, 1477, 1132], [972, 1183, 1309, 1211],
 [972, 1362, 1309, 1390], [1309, 1362, 1477, 1390], [972, 1440, 1309, 1468],
 [2172, 1104, 2509, 1132], [2172, 1183, 2509, 1211], [2172, 1362, 2509, 1390], [2172, 1440, 2509, 1468],
 [2004, 1183, 2172, 1211], [2004, 1441, 2172, 1469]].forEach(b => box(...b));
shape('M1438 1065H1740V1093H1701V1250H1740V1278H1438V1250H1477V1093H1438z');
shape('M1438 1323H1740V1351H1701V1507H1740V1535H1438V1507H1477V1351H1438z');
shape('M1741 992H2043V1020H2004V1216H1780V1020H1741z');
shape('M1741 1250H2043V1278H2004V1474H1780V1278H1741z');

// Diameters across the vertical: x, top, bottom, label x, label y, label, witness line ends
[[812, 205, 373, 795, 264, 'Ø1.50', 784, 784], [809, 453, 621, 792, 510, 'Ø1.50', 783, 783],
 [1034, 135, 437, 1017, 247, 'Ø2.70', 1061, 1061], [1198, 290, 458, 1180, 356, 'Ø1.50', 1225, 1225],
 [990, 438, 740, 973, 527, 'Ø2.70', 962, 962], [1199, 530, 698, 1181, 585, 'Ø1.50', 1227, 1227],
 [1631, 285, 453, 1614, 346, 'Ø1.50', 1603, 1603], [1815, 228, 530, 1797, 354, 'Ø2.70', 1788, 1788],
 [2018, 292, 460, 2000, 354, 'Ø1.50', 1990, 1990], [1645, 501, 669, 1628, 567, 'Ø1.50', 1618, 1618],
 [1822, 531, 833, 1804, 634, 'Ø2.70', 1788, 1794], [2024, 559, 727, 2006, 627, 'Ø1.50', 2052, 2052],
 [2462, 336, 504, 2445, 400, 'Ø1.50', 2435, 2435], [2657, 275, 577, 2640, 388, 'Ø2.70', 2631, 2668],
 [2458, 528, 696, 2441, 586, 'Ø1.50', 2431, 2431], [2640, 576, 878, 2622, 679, 'Ø2.70', 2667, 2667]]
  .forEach(([x, a, b, tx, ty, t, wa, wb]) => { vdim(x, a, b, tx, ty, t); line(wa, a, x, a); line(wb, b, x, b); });

// Diameters across the horizontal
[[430, 393, 766, 393, 515, 394], [1249, 484, 1584, 484, 1328, 484], [2066, 504, 2402, 504, 2144, 505]]
  .forEach(([x1, y1, x2, y2, tx, ty]) => { hdim(x1, y1, x2, y2, tx, ty, 'Ø3.00'); line(x1, y1 - 28, x1, y1); line(x2, y1 - 28, x2, y1); });
[[907, 285, 1130, 287, 1047, 288], [889, 586, 1112, 590, 1039, 590], [1721, 380, 1943, 378, 1865, 380],
 [1711, 677, 1934, 686, 1862, 685], [2550, 427, 2774, 425, 2704, 427], [2516, 729, 2739, 725, 2647, 728]]
  .forEach(([x1, y1, x2, y2, tx, ty]) => hdim(x1, y1, x2, y2, tx, ty, 'Ø2.00'));

// Widths
[[1114, 972, 1309, 1133, '3.00'], [1120, 1309, 1477, 1413, '1.50'], [1197, 972, 1309, 1128, '3.00'],
 [1087, 1438, 1740, 1582, '2.70'], [1148, 1477, 1701, 1588, '2.00'], [1263, 1438, 1740, 1615, '2.70'],
 [1333, 1477, 1701, 1574, '2.00'], [1500, 1438, 1740, 1599, '2.70'], [1371, 972, 1309, 1131, '3.00'],
 [1370, 1309, 1477, 1390, '1.50'], [1450, 972, 1309, 1125, '3.00'], [1013, 1741, 2043, 1911, '2.70'],
 [1159, 1780, 2004, 1888, '2.00'], [1274, 1741, 2043, 1898, '2.70'], [1367, 1780, 2004, 1881, '2.00'],
 [1458, 2004, 2172, 2066, '1.50'], [1194, 2004, 2172, 2065, '1.50'], [1120, 2172, 2509, 2330, '3.00'],
 [1197, 2172, 2509, 2330, '3.00'], [1377, 2172, 2509, 2328, '3.00'], [1456, 2172, 2509, 2327, '3.00']]
  .forEach(([y, x1, x2, tx, t]) => hdim(x1, y, x2, y, tx, y + 1, t));
line(2061, 1045, 2531, 1045, 'start');
line(2566, 1045, 2954, 1045, 'end');
label(2535, 1046, '7.96', 'plain');

// Heights
vdim(954, 1104, 1362, 942, 1215, '2.30');
vdim(1431, 1104, 1361, 1417, 1240, '2.30');
line(1625, 1065, 1625, 1148, 'start');
line(1625, 1166, 1625, 1278, 'end');
label(1612, 1158, '1.90');
vdim(1658, 1065, 1322, 1645, 1204, '2.30');
vdim(1654, 1323, 1535, 1641, 1367, '1.90');
vdim(1949, 992, 1216, 1936, 1073, '2.00');
vdim(1987, 992, 1249, 1974, 1120, '2.30');
vdim(1950, 1250, 1474, 1937, 1380, '2.00');
vdim(2390, 1104, 1362, 2377, 1289, '2.30');
vdim(2129, 1183, 1440, 2115, 1324, '2.30');
span(1047, 1132, 1182, 1038, 1158, '.45');
span(1061, 1390, 1440, 1053, 1416, '.45');
span(1471, 1507, 1535, 1462, 1521, '.25');

// Thicknesses, arrows outside
[[933, 1021, 1064, 925, 1036, '.38'], [1018, 1104, 1132, 1010, 1122, '.25'], [1331, 1104, 1132, 1322, 1112, '.25'],
 [1231, 1093, 1105, 1223, 1098, '.10'], [1030, 1183, 1211, 1022, 1200, '.25'], [1465, 1065, 1093, 1456, 1077, '.25'],
 [1472, 1250, 1278, 1463, 1269, '.25'], [1457, 1323, 1351, 1448, 1334, '.25'], [1027, 1362, 1390, 1018, 1377, '.25'],
 [1331, 1362, 1390, 1323, 1377, '.25'], [1003, 1440, 1468, 994, 1451, '.25'], [1766, 992, 1020, 1758, 1004, '.25'],
 [1766, 1250, 1278, 1758, 1262, '.25'], [2038, 1441, 1469, 2030, 1449, '.25'], [2103, 1183, 1211, 2095, 1201, '.25'],
 [2582, 1021, 1064, 2573, 1037, '.38'], [2233, 1104, 1132, 2224, 1118, '.25'], [2274, 1132, 1183, 2266, 1167, '.45'],
 [2206, 1183, 1211, 2197, 1200, '.25'], [2591, 1279, 1321, 2582, 1298, '.38'], [2216, 1362, 1390, 2207, 1383, '.25'],
 [2270, 1389, 1441, 2261, 1419, '.45'], [2191, 1440, 1468, 2182, 1457, '.25']].forEach(g => gap(...g));
gap(1555, 1278, 1322, 1547, 1298, '.40', 55, 55, 'ref');
gap(1881, 1216, 1250, 1873, 1228, '.30', 55, 55, 'ref');

// Witness lines
[[926, 1104, 962, 1104], [926, 1362, 962, 1362], [983, 1104, 1046, 1104], [983, 1132, 1046, 1132], [983, 1183, 1058, 1183],
 [983, 1211, 1058, 1211], [1203, 1093, 1427, 1093], [1450, 1093, 1492, 1093], [1450, 1250, 1500, 1250], [1450, 1278, 1500, 1278],
 [1450, 1507, 1500, 1507], [1445, 1351, 1485, 1351], [983, 1362, 1055, 1362], [983, 1390, 1055, 1390], [983, 1440, 1030, 1440],
 [983, 1468, 1030, 1468], [1320, 1104, 1358, 1104], [1320, 1132, 1358, 1132], [1320, 1362, 1358, 1362],
 [972, 1132, 972, 1142], [1309, 1132, 1309, 1148], [972, 1211, 972, 1224], [1309, 1211, 1309, 1225], [972, 1390, 972, 1399],
 [1309, 1390, 1309, 1399], [972, 1468, 972, 1478], [1309, 1468, 1309, 1478], [1438, 1054, 1438, 1059], [1740, 985, 1740, 1054],
 [1740, 1104, 1740, 1115], [1740, 1236, 1740, 1302], [2043, 1250, 2043, 1302], [2043, 981, 2043, 985], [1477, 1305, 1477, 1340],
 [1701, 1305, 1701, 1340], [1438, 1473, 1438, 1507], [1740, 1473, 1740, 1507], [2004, 1440, 2004, 1486], [2004, 1183, 2004, 1222],
 [2061, 1021, 2061, 1072], [2954, 1021, 2954, 1072], [2172, 1104, 2172, 1147], [2509, 1104, 2509, 1147], [2172, 1183, 2172, 1225],
 [2509, 1183, 2509, 1225], [2172, 1362, 2172, 1405], [2509, 1362, 2509, 1404], [2172, 1440, 2172, 1486], [2509, 1440, 2509, 1483],
 [1766, 1278, 1794, 1278], [1438, 1215, 1438, 1250], [2183, 1104, 2260, 1104], [2183, 1132, 2260, 1132], [2183, 1362, 2243, 1362],
 [2077, 1183, 2161, 1183], [2077, 1211, 2161, 1211]]
  .forEach(w => line(...w));

// Origin
out.push('<path class="axis" d="M2434 700V731H2446"/><path class="axis-tip" d="M2434 689l4 14h-8zM2455 731l-13-4v8z"/>');

document.getElementById('sketch').insertAdjacentHTML('beforeend', out.join(''));
```
